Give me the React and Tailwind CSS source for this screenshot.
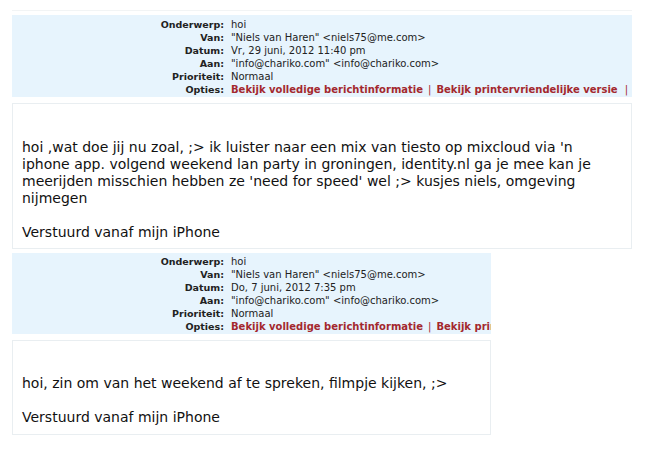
import React from "react";

const Row = ({ label, children }) => (
  <div className="flex leading-[13px] whitespace-nowrap">
    <div className="w-[212px] shrink-0 text-right font-bold text-[9.5px] text-[#222]">{label}</div>
    <div className="pl-[7px] text-[10px] text-[#222]">{children}</div>
  </div>
);

const Header = ({ date, className }) => (
  <div className={`bg-[#e7f4fd] pb-[1px] overflow-hidden font-['DejaVu_Sans',sans-serif] ${className}`}>
    <Row label="Onderwerp:">hoi</Row>
    <Row label="Van:">"Niels van Haren" &lt;niels75@me.com&gt;</Row>
    <Row label="Datum:">{date}</Row>
    <Row label="Aan:">"info@chariko.com" &lt;info@chariko.com&gt;</Row>
    <Row label="Prioriteit:">Normaal</Row>
    <Row label="Opties:">
      <span className="font-bold text-[#a3282e]">Bekijk volledige berichtinformatie</span>
      <span className="text-[#a3282e] px-[5px]">|</span>
      <span className="font-bold text-[#a3282e]">Bekijk printervriendelijke versie</span>
      <span className="text-[#a3282e] px-[7px]">|</span>
    </Row>
  </div>
);

const Body = ({ children, className }) => (
  <div className={`border border-[#e9eef1] pl-[9px] pr-3 text-[14px] leading-[17px] text-[#111] font-['DejaVu_Sans',sans-serif] ${className}`}>
    <br />
    <br />
    {children}
    <br />
    <br />
    Verstuurd vanaf mijn iPhone
  </div>
);

export default function App() {
  return (
    <div className="bg-white w-[645px] h-[457px] pl-[12px] pt-[10px]">
      <div className="w-[620px] border-t border-[#f2f4f5] pt-[4px]">
        <Header date="Vr, 29 juni, 2012 11:40 pm" className="w-[620px] pt-[3px]" />
        <Body className="w-[620px] mt-[6px] pt-[1px] pb-[7px]">
          hoi ,wat doe jij nu zoal, ;&gt; ik luister naar een mix van tiesto op mixcloud via 'n iphone app. volgend weekend lan party in groningen, identity.nl ga je mee kan je meerijden misschien hebben ze 'need for speed' wel ;&gt; kusjes niels, omgeving nijmegen
        </Body>
      </div>
      <Header date="Do, 7 juni, 2012 7:35 pm" className="w-[479px] mt-[4px] pt-[2px]" />
      <Body className="w-[479px] mt-[6px] pt-0 pb-[8px]">
        hoi, zin om van het weekend af te spreken, filmpje kijken, ;&gt;
      </Body>
    </div>
  );
}
